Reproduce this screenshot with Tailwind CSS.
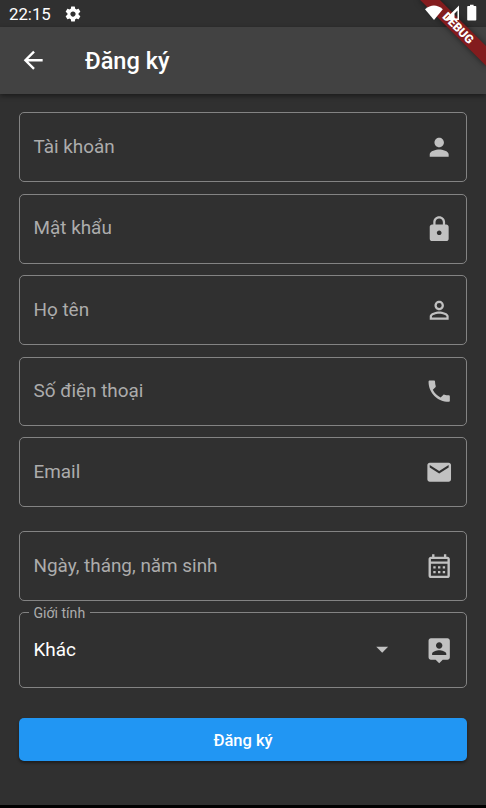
<!DOCTYPE html>
<html lang="vi">
<head>
<meta charset="utf-8">
<title>Đăng ký</title>
<script src="https://cdn.jsdelivr.net/npm/@tailwindcss/browser@4"></script>
</head>
<body class="bg-[#303030]">
<div class="relative flex h-[808px] w-[486px] flex-col overflow-hidden bg-[#303030] font-[Roboto,sans-serif] text-white">
  <div class="flex h-[27px] shrink-0 items-center pl-[9px] text-[16.800px] leading-none">
    <span class="w-[43px] pt-px">22:15</span>
    <svg class="ml-[11.500px] size-[18px]" viewBox="0 0 24 24" fill="#fff"><path d="M19.43 12.98c.04-.32.07-.64.07-.98s-.03-.66-.07-.98l2.11-1.65c.19-.15.24-.42.12-.64l-2-3.46c-.12-.22-.39-.3-.61-.22l-2.49 1c-.52-.4-1.08-.73-1.69-.98l-.38-2.65A.49.49 0 0 0 14 2h-4c-.25 0-.46.18-.49.42l-.38 2.65c-.61.25-1.17.59-1.69.98l-2.49-1c-.23-.09-.49 0-.61.22l-2 3.46c-.13.22-.07.49.12.64l2.11 1.65c-.04.32-.07.65-.07.98s.03.66.07.98l-2.11 1.65c-.19.15-.24.42-.12.64l2 3.46c.12.22.39.3.61.22l2.49-1c.52.4 1.08.73 1.69.98l.38 2.65c.03.24.24.42.49.42h4c.25 0 .46-.18.49-.42l.38-2.65c.61-.25 1.17-.59 1.69-.98l2.49 1c.23.09.49 0 .61-.22l2-3.46c.12-.22.07-.49-.12-.64l-2.11-1.65zM12 15.5c-1.93 0-3.500-1.570-3.500-3.500s1.570-3.500 3.500-3.500 3.500 1.570 3.500 3.500-1.570 3.500-3.500 3.500z"/></svg>
  </div>
  <header class="flex h-[66.500px] shrink-0 items-center bg-[#424242] pl-[19px] shadow-[0_2px_5px_rgba(0,0,0,0.45)]">
    <svg class="size-[28.400px]" viewBox="0 0 24 24" fill="#fff"><path d="M20 11H7.830l5.590-5.590L12 4l-8 8 8 8 1.410-1.410L7.830 13H20v-2z"/></svg>
    <h1 class="ml-[37.500px] pt-[4px] text-[23.600px] leading-none font-medium">Đăng ký</h1>
  </header>
  <main class="flex flex-col px-[19px] pt-[18.500px] text-[18.900px] text-[#acacac]">
    <div class="mb-[11.500px] flex h-[70px] items-center justify-between rounded-[5px] border border-[#838383] pr-[13px] pl-[13.500px]">
      <span>Tài khoản</span>
      <svg class="size-[28.400px]" viewBox="0 0 24 24" fill="#c1c1c1"><path d="M12 12c2.210 0 4-1.790 4-4s-1.790-4-4-4-4 1.790-4 4 1.790 4 4 4zm0 2c-2.670 0-8 1.340-8 4v2h16v-2c0-2.660-5.330-4-8-4z"/></svg>
    </div>
    <div class="mb-[11.500px] flex h-[70px] items-center justify-between rounded-[5px] border border-[#838383] pr-[13px] pl-[13.500px]">
      <span>Mật khẩu</span>
      <svg class="mt-[1px] size-[28.400px]" viewBox="0 0 24 24" fill="#c1c1c1"><path d="M18 8h-1V6c0-2.760-2.240-5-5-5S7 3.240 7 6v2H6c-1.100 0-2 .9-2 2v10c0 1.100.9 2 2 2h12c1.100 0 2-.9 2-2V10c0-1.100-.9-2-2-2zm-6 9c-1.100 0-2-.9-2-2s.9-2 2-2 2 .9 2 2-.9 2-2 2zm3.100-9H8.900V6c0-1.710 1.390-3.100 3.100-3.100s3.100 1.390 3.100 3.100v2z"/></svg>
    </div>
    <div class="mb-[11.500px] flex h-[70px] items-center justify-between rounded-[5px] border border-[#838383] pr-[13px] pl-[13.500px]">
      <span>Họ tên</span>
      <svg class="size-[28.400px]" viewBox="0 0 24 24" fill="#c1c1c1"><path d="M12 5.900a2.100 2.100 0 1 1 0 4.200 2.100 2.100 0 0 1 0-4.200m0 9c2.970 0 6.100 1.460 6.100 2.100v1.100H5.900V17c0-.64 3.130-2.100 6.100-2.100M12 4C9.790 4 8 5.790 8 8s1.790 4 4 4 4-1.790 4-4-1.790-4-4-4zm0 9c-2.670 0-8 1.340-8 4v3h16v-3c0-2.660-5.330-4-8-4z"/></svg>
    </div>
    <div class="mb-[11.500px] flex h-[69px] items-center justify-between rounded-[5px] border border-[#838383] pr-[13px] pl-[13.500px]">
      <span class="pt-px">Số điện thoại</span>
      <svg class="mt-[1px] size-[28.400px]" viewBox="0 0 24 24" fill="#c1c1c1"><path d="M6.620 10.790c1.440 2.830 3.760 5.140 6.590 6.590l2.200-2.200c.27-.27.67-.36 1.020-.24 1.120.37 2.330.57 3.570.57.55 0 1 .45 1 1V20c0 .55-.45 1-1 1-9.390 0-17-7.610-17-17 0-.55.45-1 1-1h3.500c.55 0 1 .45 1 1 0 1.250.2 2.450.57 3.570.11.35.03.74-.25 1.020l-2.200 2.200z"/></svg>
    </div>
    <div class="mb-[24px] flex h-[70px] items-center justify-between rounded-[5px] border border-[#838383] pr-[13px] pl-[13.500px]">
      <span>Email</span>
      <svg class="size-[28.400px]" viewBox="0 0 24 24" fill="#c1c1c1"><path d="M20 4H4c-1.100 0-1.990.9-1.990 2L2 18c0 1.100.9 2 2 2h16c1.100 0 2-.9 2-2V6c0-1.100-.9-2-2-2zm0 4l-8 5-8-5V6l8 5 8-5v2z"/></svg>
    </div>
    <div class="mb-[3px] flex h-[69.500px] items-center justify-between rounded-[5px] border border-[#838383] pr-[13px] pl-[13.500px]">
      <span>Ngày, tháng, năm sinh</span>
      <svg class="size-[28.400px]" viewBox="0 0 24 24" fill="#c1c1c1" fill-rule="evenodd"><path d="M19 4h-1V2h-2v2H8V2H6v2H5c-1.110 0-2 .9-2 2v14c0 1.100.89 2 2 2h14c1.100 0 2-.9 2-2V6c0-1.100-.9-2-2-2zm0 16H5V10h14v10zm0-12H5V6h14v2zM7 12h2v2H7zm4 0h2v2h-2zm4 0h2v2h-2zM7 16h2v2H7zm4 0h2v2h-2zm4 0h2v2h-2z"/></svg>
    </div>
    <fieldset class="h-[84.500px] rounded-[5px] border border-[#838383] pr-[13px] pl-[9px]">
      <legend class="h-[18px] px-[5px] text-[14.100px] leading-[18px]"><span class="-ml-[0.500px]">Giới tính</span></legend>
      <div class="flex h-[57px] items-center pl-[4.500px]">
        <span class="grow text-white">Khác</span>
        <svg class="mr-[28.300px] mb-[2px] size-[28.400px]" viewBox="0 0 24 24" fill="#c1c1c1"><path d="M7 10l5 5 5-5z"/></svg>
        <svg class="size-[28.400px]" viewBox="0 0 24 24" fill="#c1c1c1"><path d="M19 2H5c-1.110 0-2 .9-2 2v14c0 1.100.89 2 2 2h4l3 3 3-3h4c1.100 0 2-.9 2-2V4c0-1.100-.9-2-2-2zm-7 3.300c1.490 0 2.700 1.210 2.700 2.700s-1.210 2.700-2.700 2.700S9.300 9.490 9.300 8s1.210-2.700 2.700-2.700zM18 16H6v-.9c0-2 4-3.100 6-3.100s6 1.100 6 3.100v.9z"/></svg>
      </div>
    </fieldset>
    <button class="mt-[30.300px] h-[42.500px] rounded-[5px] bg-[#2196f3] pt-[3px] text-[16.500px] font-medium text-white shadow-[0_2px_3px_rgba(0,0,0,0.4)]">Đăng ký</button>
  </main>
  <div class="mt-auto h-[3px] bg-black"></div>
  <div class="absolute top-[21.300px] left-[410.600px] flex h-[14.200px] w-[94px] rotate-45 items-center justify-center bg-[#831c1e] text-[12px] leading-none font-black shadow-[0_0_6px_rgba(0,0,0,0.5)]">DEBUG</div>
  <svg class="absolute top-0 right-0 h-[27px] w-[66px]" viewBox="0 0 66 27" fill="#fff"><path d="M5 9.300Q14 1.800 22.800 9.300L14 20z"/><path fill-rule="evenodd" d="M39 5.500v14.500H24.500zM37.500 10.500v8h-3V13.500z"/><path d="M48 6h2V4.800h3.600V6H55.500q.8 0 .8.8v12.900q0 .8-.8.8H48q-.8 0-.8-.8V6.800q0-.8.8-.8z"/></svg>
</div>
</body>
</html>
